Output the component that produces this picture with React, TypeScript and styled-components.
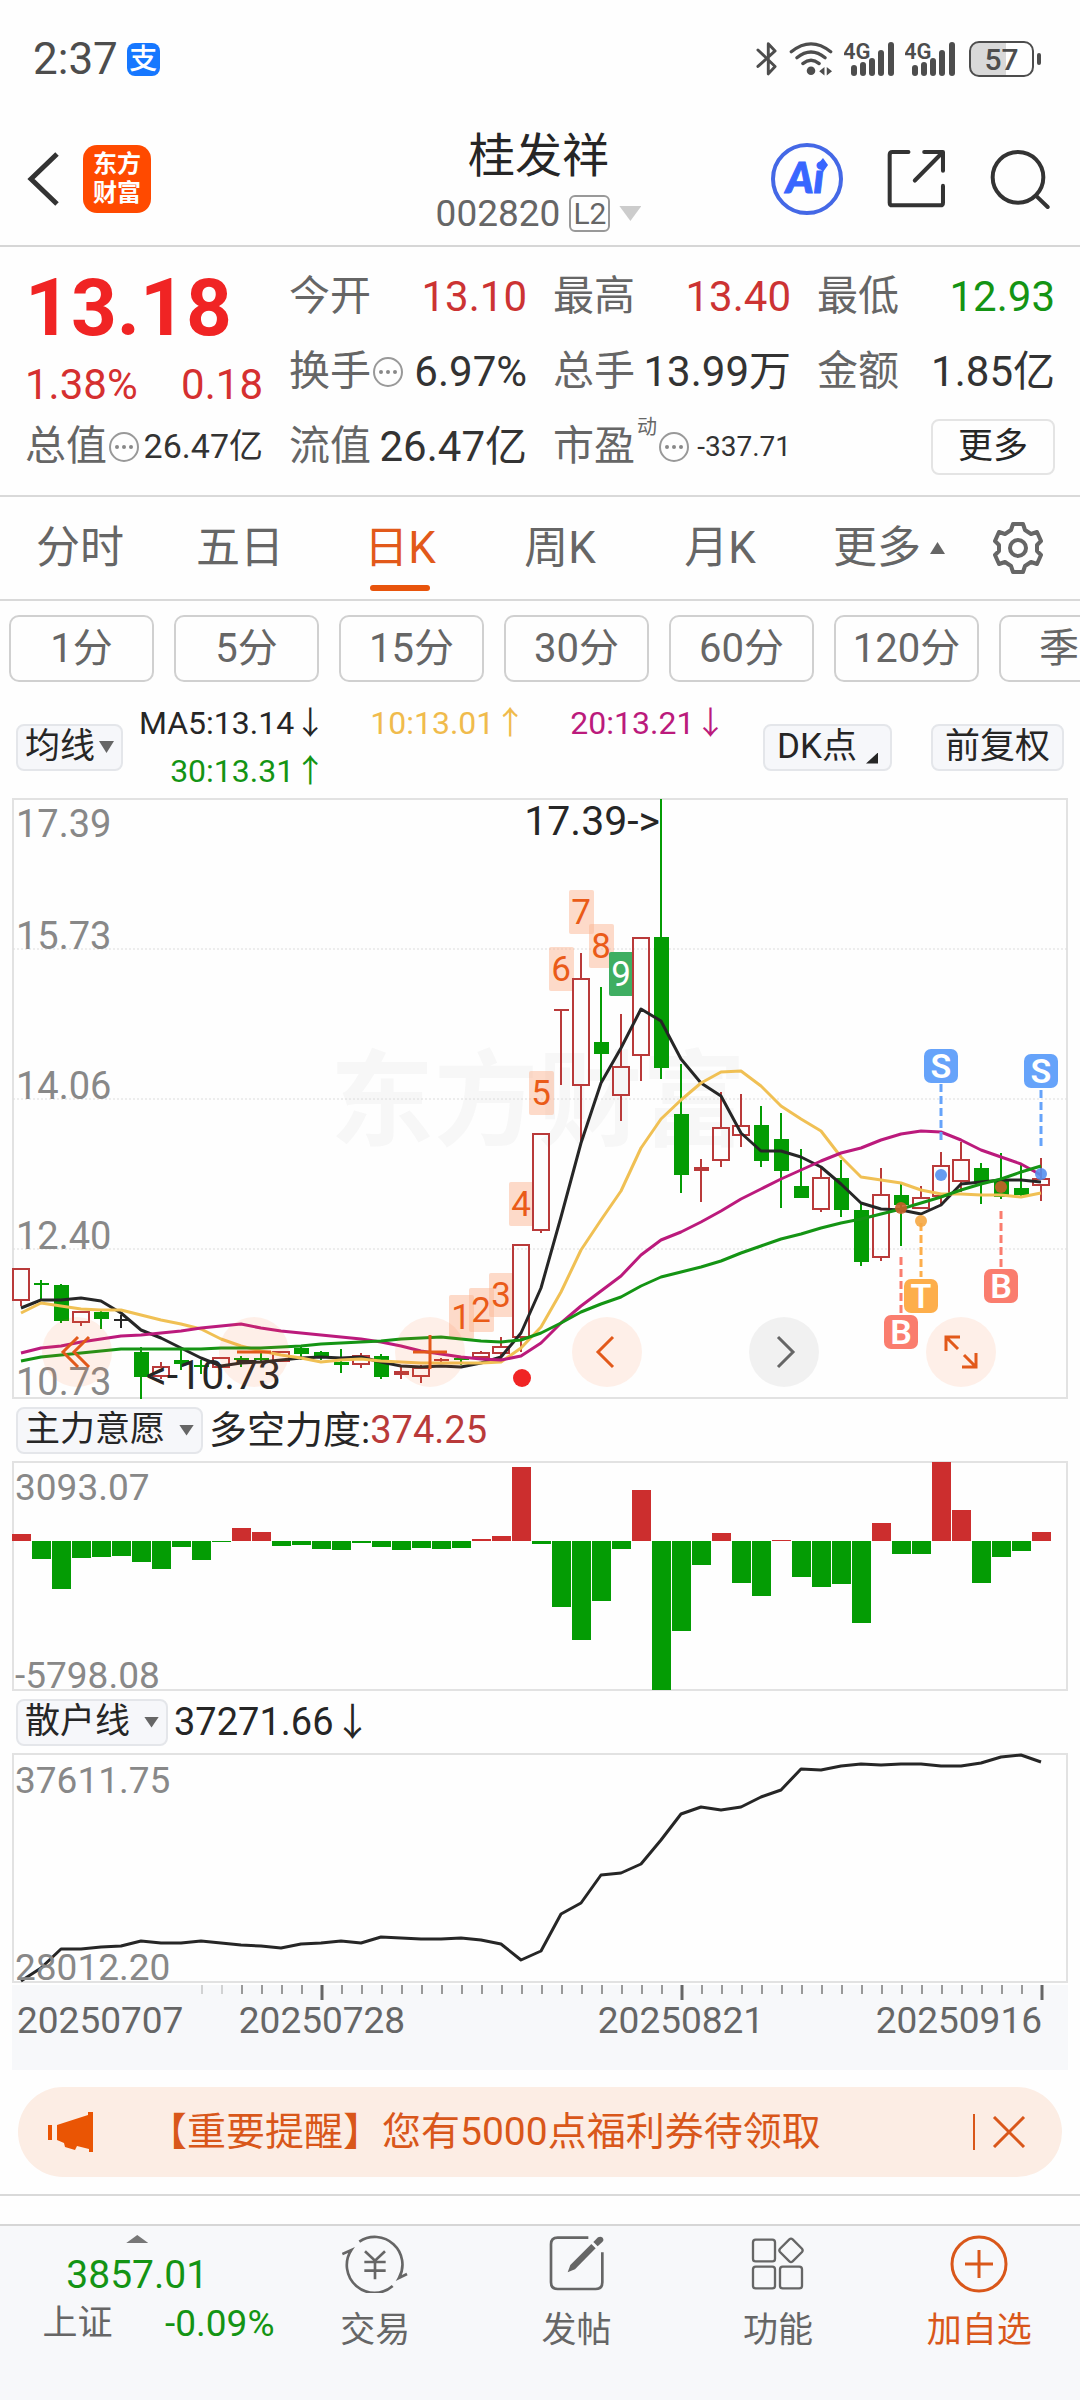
import React from "react";
import styled, { createGlobalStyle } from "styled-components";

const UP = "#b93a3a";
const DOWN = "#049c04";
const ORANGE = "#e2591a";
const INK = "#262626";
const GREY = "#666666";

const GlobalStyle = createGlobalStyle`
  * { box-sizing: border-box; }
  body {
    margin: 0;
    background: #fefefe;
    color: ${INK};
    font-family: Roboto, "Noto Sans CJK SC", sans-serif;
  }
  button {
    font-family: inherit;
    color: inherit;
    background: none;
    border: 0;
    padding: 0;
    margin: 0;
    white-space: nowrap;
    cursor: pointer;
  }
  svg { display: block; flex: none; }
`;

const Page = styled.div`
  display: flex;
  flex-direction: column;
  min-height: 100vh;
  overflow: hidden;
`;

/* ---------- status bar ---------- */

const StatusBar = styled.div`
  display: flex;
  align-items: center;
  justify-content: space-between;
  padding: 36px 39px 30px 33px;
  color: #4d4d4d;
`;

const StatusGroup = styled.div<{ $gap: number }>`
  display: flex;
  align-items: center;
  gap: ${(p) => p.$gap}px;
  height: 46px;
`;

const Clock = styled.span`
  font-size: 44px;
  line-height: 46px;
`;

const PayBadge = styled.span`
  width: 33px;
  height: 33px;
  border-radius: 8px;
  background: #1677ff;
  color: #fff;
  font-size: 28px;
  font-weight: 500;
  line-height: 33px;
  text-align: center;
`;

const Battery = styled.span`
  display: flex;
  align-items: center;
  margin-left: 3px;

  &::after {
    content: "";
    width: 4px;
    height: 12px;
    margin-left: 3px;
    border-radius: 2px;
    background: #4d4d4d;
  }
`;

const BatteryBody = styled.span`
  width: 65px;
  height: 36px;
  border: 2px solid #4d4d4d;
  border-radius: 10px;
  background: linear-gradient(90deg, #d9d9d9 58%, transparent 58%);
  font-size: 30px;
  font-weight: 500;
  line-height: 34px;
  text-align: center;
`;

/* ---------- header ---------- */

const Header = styled.header`
  display: grid;
  grid-template-columns: 1fr auto 1fr;
  align-items: center;
  height: 135px;
  padding: 0 30px 0 27px;
  border-bottom: 2px solid #d6d6d6;
`;

const HeaderSide = styled.div<{ $end?: boolean }>`
  display: flex;
  align-items: center;
  gap: ${(p) => (p.$end ? 44 : 24)}px;
  justify-content: ${(p) => (p.$end ? "flex-end" : "flex-start")};
`;

const AppLogo = styled.span`
  display: grid;
  place-content: center;
  width: 68px;
  height: 68px;
  border-radius: 14px;
  background: #ff4a00;
  color: #fff;
  font-size: 24px;
  font-weight: 700;
  line-height: 29px;
`;

const TitleBlock = styled.div`
  display: flex;
  flex-direction: column;
  align-items: center;
  padding-top: 8px;
`;

const Title = styled.h1`
  margin: 0;
  font-size: 47px;
  font-weight: 400;
  line-height: 62px;
`;

const CodeButton = styled.button`
  display: flex;
  align-items: center;
  gap: 9px;
  color: ${GREY};
  font-size: 37px;
  line-height: 54px;
`;

const LevelTag = styled.span`
  width: 41px;
  height: 37px;
  border: 2px solid #999;
  border-radius: 6px;
  font-size: 30px;
  line-height: 34px;
  text-align: center;
`;

const Triangle = styled.i<{ $w: number; $h: number; $color: string; $up?: boolean }>`
  flex: none;
  width: ${(p) => p.$w}px;
  height: ${(p) => p.$h}px;
  background: ${(p) => p.$color};
  clip-path: ${(p) =>
    p.$up ? "polygon(50% 0, 100% 100%, 0 100%)" : "polygon(0 0, 100% 0, 50% 100%)"};
`;

/* ---------- quote ---------- */

const Quote = styled.section`
  display: grid;
  grid-template-columns: repeat(4, 1fr);
  grid-auto-rows: 75px;
  column-gap: 26px;
  padding: 12px 25px 11px;
  border-bottom: 2px solid #d9d9d9;
`;

const PriceCell = styled.div`
  grid-row: span 2;
  color: #f02424;
`;

const Price = styled.div`
  font-size: 80px;
  font-weight: 700;
  line-height: 98px;
`;

const Change = styled.div`
  display: flex;
  justify-content: space-between;
  color: #d53030;
  font-size: 42px;
  line-height: 56px;
`;

const Cell = styled.div`
  display: flex;
  align-items: center;
  justify-content: space-between;
  white-space: nowrap;
`;

const CellLabel = styled.span`
  display: flex;
  align-items: center;
  align-self: stretch;
  gap: 2px;
  color: ${GREY};
  font-size: 41px;
  line-height: 75px;

  sup {
    align-self: flex-start;
    padding-top: 8px;
    font-size: 20px;
    line-height: 20px;
  }
`;

const CellValue = styled.span<{ $color?: string; $size?: number }>`
  color: ${(p) => p.$color || "#333"};
  font-size: ${(p) => p.$size || 42}px;
  line-height: 75px;
`;

const MoreCell = styled.div`
  display: flex;
  align-items: center;
  justify-content: flex-end;
`;

const MoreButton = styled.button`
  width: 124px;
  height: 56px;
  border: 2px solid #e4e4e4;
  border-radius: 8px;
  font-size: 35px;
  line-height: 48px;
`;

/* ---------- period tabs ---------- */

const Tabs = styled.nav`
  display: grid;
  grid-template-columns: repeat(5, 160fr) 178fr 80fr;
  height: 104px;
  padding-right: 22px;
  border-bottom: 2px solid #d9d9d9;
`;

const Tab = styled.button<{ $active?: boolean }>`
  display: flex;
  align-items: center;
  justify-content: center;
  gap: 9px;
  position: relative;
  color: ${(p) => (p.$active ? ORANGE : GREY)};
  font-size: 44px;
  line-height: 96px;

  &::after {
    content: "";
    display: ${(p) => (p.$active ? "block" : "none")};
    position: absolute;
    bottom: 8px;
    width: 60px;
    height: 6px;
    border-radius: 3px;
    background: #e8540c;
  }
`;

const Pills = styled.div`
  display: flex;
  gap: 20px;
  padding: 14px 0 14px 9px;
  overflow: hidden;
`;

const Pill = styled.button`
  flex: none;
  width: 145px;
  height: 67px;
  border: 2px solid #d0d0d0;
  border-radius: 10px;
  color: ${GREY};
  font-size: 40px;
  line-height: 60px;
`;

/* ---------- average legend ---------- */

const Legend = styled.div`
  display: flex;
  align-items: center;
  padding: 0 16px;
  height: 102px;
`;

const Chip = styled.button<{ $gap?: number; $pad?: number }>`
  display: flex;
  align-items: center;
  gap: ${(p) => p.$gap || 0}px;
  flex: none;
  height: 47px;
  padding: 0 ${(p) => p.$pad || 7}px;
  border: 2px solid #e4e6ea;
  border-radius: 8px;
  background: #f6f7fa;
  font-size: 35px;
  line-height: 42px;
`;

const Corner = styled.i`
  align-self: flex-end;
  width: 12px;
  height: 11px;
  margin-bottom: 5px;
  background: ${INK};
  clip-path: polygon(100% 0, 100% 100%, 0 100%);
`;

const Averages = styled.div`
  display: grid;
  grid-template-columns: repeat(3, auto);
  justify-content: start;
  justify-items: end;
  column-gap: 44px;
  flex: 1;
  padding-left: 16px;
  font-size: 32px;
  line-height: 48px;
`;

const Tint = styled.span<{ $color: string }>`
  color: ${(p) => p.$color};
  white-space: nowrap;
`;

const RightChips = styled.div`
  display: flex;
  gap: 39px;
`;

/* ---------- charts ---------- */

const Panel = styled.div`
  position: relative;
`;

const Plot = styled.svg`
  width: 100%;
  height: auto;
`;

const PanelTitle = styled.div`
  display: flex;
  align-items: center;
  gap: 6px;
  height: 60px;
  padding: 0 16px;
  font-size: 38px;
  line-height: 58px;
  white-space: nowrap;
`;

const RoundButton = styled.button<{ $x: number; $grey?: boolean }>`
  position: absolute;
  left: ${(p) => p.$x}%;
  top: 92%;
  display: grid;
  place-items: center;
  width: 70px;
  height: 70px;
  border-radius: 50%;
  transform: translate(-50%, -50%);
  background: ${(p) => (p.$grey ? "rgba(0, 0, 0, 0.05)" : "rgba(255, 110, 40, 0.1)")};
`;

/* ---------- banner ---------- */

const BannerWrap = styled.div`
  padding: 17px 18px;
  border-bottom: 2px solid #d9d9d9;
`;

const Banner = styled.div`
  display: flex;
  align-items: center;
  height: 90px;
  padding: 0 36px 0 30px;
  border-radius: 45px;
  background: #fcede4;
  color: #d9571a;
`;

const BannerText = styled.a`
  flex: 1;
  padding-left: 54px;
  color: inherit;
  font-size: 39px;
  line-height: 48px;
  text-decoration: none;
  white-space: nowrap;
`;

const CloseButton = styled.button`
  height: 36px;
  padding-left: 17px;
  border-left: 2px solid #d9571a;
`;

/* ---------- bottom bar ---------- */

const BottomBar = styled.nav`
  display: grid;
  grid-template-columns: 274fr repeat(4, 201fr);
  align-items: start;
  flex: 1;
  margin-top: 28px;
  border-top: 2px solid #d6d6d6;
  background: #f7f8fa;
`;

const IndexButton = styled.button`
  display: flex;
  flex-direction: column;
  align-items: center;
  padding: 9px 0 0;
  color: #149414;
`;

const IndexValue = styled.span`
  margin-top: 9px;
  font-size: 39px;
  line-height: 46px;
`;

const IndexRow = styled.span`
  display: flex;
  justify-content: space-between;
  align-items: center;
  align-self: flex-end;
  width: 232px;
  margin-top: 6px;
  font-size: 37px;
  line-height: 40px;
`;

const IndexName = styled.span`
  color: ${GREY};
  font-size: 35px;
`;

const NavButton = styled.button<{ $accent?: boolean }>`
  display: flex;
  flex-direction: column;
  align-items: center;
  gap: 17px;
  padding-top: 9px;
  color: ${(p) => (p.$accent ? "#d9571a" : GREY)};
  font-size: 35px;
  line-height: 42px;
`;

/* ---------- icons ---------- */

const BluetoothIcon = () => (
  <svg width="22" height="36" viewBox="44 30 68 110" fill="none" stroke="#4d4d4d" strokeWidth="9" strokeLinecap="round" strokeLinejoin="round">
    <path d="M50 57 L103 108 L82 131 V38 L103 60 L50 108" />
  </svg>
);

const WifiIcon = () => (
  <svg width="44" height="36" viewBox="146 30 134 108" fill="none" stroke="#4d4d4d" strokeWidth="10" strokeLinecap="round">
    <path d="M153 62 Q213 14 273 62" />
    <path d="M170 80 Q213 45 256 80" />
    <path d="M188 98 Q213 78 238 98" />
    <circle cx="213" cy="120" r="13" fill="#4d4d4d" stroke="none" />
    <path d="M238 121 L254 108 V134 Z M277 121 L261 108 V134 Z" fill="#4d4d4d" stroke="none" />
  </svg>
);

const SignalIcon = () => (
  <svg width="50" height="36" viewBox="0 0 50 36">
    <text x="-1" y="18" fontSize="22" fontWeight="600" fill="#4d4d4d">4G</text>
    <g fill="#4d4d4d">
      <rect x="7" y="24" width="6" height="11" rx="3" />
      <rect x="16" y="21" width="6" height="14" rx="3" />
      <rect x="25" y="17" width="6" height="18" rx="3" />
      <rect x="34" y="9" width="6" height="26" rx="3" />
      <rect x="44" y="1" width="6" height="34" rx="3" />
    </g>
  </svg>
);

const BackIcon = () => (
  <svg width="32" height="54" viewBox="0 0 32 54" fill="none" stroke="#333" strokeWidth="5">
    <path d="M30 2 L4 27 L30 52" />
  </svg>
);

const AiIcon = () => (
  <svg width="72" height="72" viewBox="0 0 72 72">
    <circle cx="36" cy="36" r="34" fill="none" stroke="#4468e6" strokeWidth="4" />
    <text x="34" y="50" textAnchor="middle" fontFamily="Lato, sans-serif" fontWeight="900" fontStyle="italic" fontSize="42" fill="#3866ff" stroke="#3866ff" strokeWidth="1">Ai</text>
    <path d="M52 15 L57 22 L52 29 L46 22 Z" fill="#3866ff" />
  </svg>
);

const ShareIcon = () => (
  <svg width="59" height="59" viewBox="442 360 176 176" fill="none" stroke="#333" strokeWidth="12" strokeLinecap="round" strokeLinejoin="round">
    <path d="M506 369 H458 Q450 369 450 377 V520 Q450 528 458 528 H601 Q609 528 609 520 V470" />
    <path d="M553 369 H609 V425 M606 372 L525 454" />
  </svg>
);

const SearchIcon = () => (
  <svg width="60" height="60" viewBox="752 355 180 180" fill="none" stroke="#333" strokeWidth="12" strokeLinecap="round">
    <circle cx="836" cy="440" r="76" />
    <path d="M892 497 L925 529" />
  </svg>
);

const InfoIcon = () => (
  <svg width="30" height="30" viewBox="0 0 30 30">
    <circle cx="15" cy="15" r="14" fill="none" stroke="#999" strokeWidth="2" />
    <g fill="#888">
      <circle cx="8" cy="15" r="2" />
      <circle cx="15" cy="15" r="2" />
      <circle cx="22" cy="15" r="2" />
    </g>
  </svg>
);

const GearIcon = () => (
  <svg width="50" height="52" viewBox="0 0 50 52" fill="none" stroke={GREY} strokeWidth="4" strokeLinejoin="round">
    <path d="M20 2 H30 L32 8 L38 12 L44 10 L48 19 L44 23 V29 L48 33 L44 42 L38 40 L32 44 L30 50 H20 L18 44 L12 40 L6 42 L2 33 L6 29 V23 L2 19 L6 10 L12 12 L18 8 Z" />
    <circle cx="25" cy="26" r="8" />
  </svg>
);

const HornIcon = () => (
  <svg width="46" height="40" viewBox="0 0 46 40" fill="#ea5504">
    <rect x="0" y="13" width="4" height="15" />
    <path d="M9 13 L40 3 V0 H45 V40 H41 V37 L29 34 L27 38 L17 35 L16 31 L9 28 Z" />
  </svg>
);

const CloseIcon = () => (
  <svg width="34" height="32" viewBox="0 0 34 32" fill="none" stroke="#d9571a" strokeWidth="3">
    <path d="M2 1 L32 31 M32 1 L2 31" />
  </svg>
);

const TradeIcon = () => (
  <svg width="66" height="58" viewBox="38 29 198 174" fill="none" stroke={GREY} strokeWidth="8">
    <path d="M90 49 A83 83 0 0 1 209 158 L233 146" />
    <path d="M190 182 A83 83 0 0 1 66 74 L39 86" />
    <path d="M107 78 L137 106 L167 78 M105 110 H169 M105 136 H169 M137 106 V162" />
  </svg>
);

const PostIcon = () => (
  <svg width="56" height="58" viewBox="658 32 168 174">
    <path d="M776 40 H684 Q664 40 664 60 V174 Q664 194 684 194 H798 Q818 194 818 174 V84" fill="none" stroke={GREY} strokeWidth="8" />
    <path d="M714 144 L722 122 L785 59 L798 72 L736 135 Z" fill={GREY} />
    <path d="M791 53 L805 39 Q813 35 819 40 Q824 47 818 53 L804 66 Z" fill={GREY} />
  </svg>
);

const FunctionIcon = () => (
  <svg width="54" height="58" viewBox="1265 30 162 174" fill="none" stroke={GREY} strokeWidth="7">
    <rect x="1271" y="44" width="66" height="65" rx="8" />
    <rect x="1271" y="125" width="66" height="65" rx="8" />
    <rect x="1352" y="125" width="66" height="65" rx="8" />
    <path d="M1380 43 Q1385 39 1390 43 L1418 71 Q1422 76 1418 81 L1390 109 Q1385 113 1380 109 L1352 81 Q1348 76 1352 71 Z" />
  </svg>
);

const AddIcon = () => (
  <svg width="58" height="58" viewBox="0 0 58 58" fill="none" stroke="#d9571a" strokeWidth="3">
    <circle cx="29" cy="29" r="27" />
    <path d="M29 15 V43 M15 29 H43" />
  </svg>
);

/* ---------- data ---------- */

type Kind = "up" | "down" | "flat";
type Candle = [Kind, number, number, number, number];

// kind, high, body top, body bottom, low
const candles: Candle[] = [
  ["up", 1268, 1268, 1301, 1306], ["down", 1280, 1283, 1285, 1300], ["down", 1284, 1285, 1321, 1323],
  ["up", 1311, 1311, 1323, 1326], ["down", 1311, 1312, 1319, 1329], ["flat", 1315, 1319, 1321, 1328],
  ["down", 1347, 1352, 1377, 1399], ["up", 1362, 1366, 1377, 1379], ["down", 1350, 1360, 1364, 1370],
  ["down", 1360, 1365, 1367, 1374], ["up", 1357, 1357, 1368, 1368], ["down", 1356, 1358, 1360, 1367],
  ["down", 1353, 1358, 1360, 1362], ["up", 1351, 1351, 1362, 1362], ["down", 1345, 1348, 1354, 1360],
  ["down", 1351, 1352, 1358, 1360], ["down", 1349, 1362, 1365, 1373], ["up", 1353, 1355, 1365, 1368],
  ["down", 1354, 1356, 1377, 1379], ["up", 1367, 1371, 1375, 1379], ["up", 1365, 1367, 1377, 1383],
  ["up", 1358, 1359, 1361, 1363], ["down", 1357, 1358, 1360, 1365], ["up", 1351, 1352, 1358, 1359],
  ["up", 1337, 1346, 1354, 1359], ["up", 1244, 1244, 1338, 1352], ["up", 1133, 1133, 1231, 1233],
  ["up", 1009, 1009, 1011, 1085], ["up", 953, 978, 1086, 1142], ["down", 987, 1042, 1054, 1083],
  ["up", 1014, 1066, 1096, 1121], ["up", 937, 937, 1056, 1081], ["down", 799, 937, 1068, 1079],
  ["down", 1064, 1114, 1175, 1193], ["up", 1159, 1167, 1171, 1202], ["up", 1092, 1127, 1161, 1167],
  ["up", 1094, 1125, 1136, 1147], ["down", 1106, 1125, 1161, 1167], ["down", 1113, 1139, 1171, 1208],
  ["down", 1149, 1186, 1198, 1198], ["up", 1167, 1177, 1210, 1212], ["down", 1160, 1178, 1210, 1217],
  ["down", 1204, 1210, 1262, 1266], ["up", 1168, 1194, 1258, 1261], ["down", 1184, 1195, 1205, 1246],
  ["up", 1186, 1197, 1209, 1209], ["up", 1152, 1165, 1197, 1204], ["up", 1142, 1159, 1182, 1192],
  ["down", 1163, 1168, 1182, 1204], ["down", 1153, 1181, 1197, 1199], ["down", 1163, 1188, 1195, 1197],
  ["up", 1158, 1178, 1186, 1201],
];

const ma5 = [1308, 1300, 1300, 1298, 1301, 1313, 1330, 1338, 1348, 1358, 1366, 1363, 1362, 1360, 1358, 1357, 1358, 1357, 1362, 1366, 1367, 1366, 1367, 1363, 1357, 1333, 1288, 1217, 1143, 1083, 1048, 1009, 1021, 1059, 1083, 1096, 1133, 1151, 1151, 1157, 1167, 1184, 1203, 1209, 1210, 1214, 1205, 1184, 1182, 1180, 1180, 1182];
const ma10 = [1313, 1303, 1306, 1309, 1310, 1310, 1315, 1320, 1324, 1329, 1339, 1346, 1351, 1355, 1358, 1362, 1360, 1359, 1361, 1362, 1363, 1363, 1363, 1363, 1362, 1348, 1327, 1292, 1250, 1220, 1191, 1148, 1119, 1100, 1083, 1072, 1071, 1086, 1106, 1119, 1131, 1157, 1177, 1180, 1183, 1190, 1194, 1194, 1195, 1195, 1197, 1193];
const ma20 = [1353, 1348, 1346, 1342, 1339, 1336, 1335, 1333, 1331, 1328, 1326, 1324, 1328, 1331, 1333, 1335, 1337, 1339, 1342, 1346, 1351, 1354, 1357, 1359, 1360, 1356, 1343, 1323, 1306, 1291, 1276, 1255, 1240, 1232, 1222, 1211, 1199, 1189, 1179, 1170, 1161, 1153, 1148, 1140, 1134, 1131, 1132, 1140, 1150, 1157, 1164, 1175];
const ma30 = [1361, 1357, 1355, 1353, 1351, 1349, 1349, 1349, 1349, 1349, 1348, 1348, 1348, 1347, 1346, 1344, 1343, 1342, 1341, 1339, 1338, 1337, 1339, 1341, 1342, 1340, 1333, 1323, 1312, 1304, 1297, 1286, 1277, 1272, 1267, 1261, 1253, 1246, 1239, 1234, 1228, 1223, 1219, 1214, 1209, 1203, 1197, 1190, 1184, 1179, 1172, 1166];

// bar heights, positive above the zero line
const force = [7, -18, -48, -17, -16, -15, -21, -28, -6, -19, -1, 13, 9, -5, -4, -8, -9, -2, -6, -9, -7, -8, -7, 2, 5, 74, -3, -66, -99, -60, -8, 51, -149, -90, -24, 8, -42, -55, 1, -36, -46, -43, -82, 18, -13, -13, 79, 31, -42, -16, -10, 9];

const retail = [1981, 1968, 1949, 1949, 1947, 1946, 1941, 1943, 1943, 1941, 1943, 1945, 1946, 1948, 1944, 1943, 1941, 1943, 1937, 1938, 1939, 1939, 1938, 1940, 1944, 1960, 1951, 1914, 1903, 1875, 1873, 1864, 1840, 1814, 1807, 1810, 1807, 1797, 1790, 1769, 1770, 1766, 1764, 1765, 1764, 1764, 1766, 1766, 1763, 1757, 1755, 1762];

const cx = (i: number) => 21 + 20 * i;
const line = (ys: number[]) => ys.map((y, i) => `${cx(i)},${y}`).join(" ");

const counts = [
  { n: 1, x: 461, y: 1295 }, { n: 2, x: 481, y: 1288 }, { n: 3, x: 501, y: 1273 },
  { n: 4, x: 521, y: 1182 }, { n: 5, x: 541, y: 1071 }, { n: 6, x: 561, y: 947 },
  { n: 7, x: 581, y: 890 }, { n: 8, x: 601, y: 924 }, { n: 9, x: 621, y: 952 },
];

const marks = [
  { t: "S", x: 941, y: 1049, from: 1084, to: 1140, dot: 1175, c: "#66a3fa" },
  { t: "S", x: 1041, y: 1054, from: 1090, to: 1146, dot: 1174, c: "#66a3fa" },
  { t: "B", x: 901, y: 1315, from: 1257, to: 1313, dot: 1208, c: "#fa7d6e" },
  { t: "T", x: 921, y: 1279, from: 1223, to: 1277, dot: 1221, c: "#fdae4b" },
  { t: "B", x: 1001, y: 1269, from: 1211, to: 1267, dot: 1187, c: "#fa7d6e" },
];
const dotColor: Record<string, string> = { S: "#5590ee", B: "#c8602a", T: "#f5a742" };

const CandleShape = ({ c, i }: { c: Candle; i: number }) => {
  const [kind, high, top, bottom, low] = c;
  const x = cx(i);
  const color = kind === "up" ? UP : kind === "down" ? DOWN : INK;
  const hollow = kind === "up" && bottom - top > 5;
  return (
    <g stroke={color} fill="none" strokeWidth="2">
      {hollow ? (
        <>
          <path d={`M${x} ${high} V${top} M${x} ${bottom} V${low}`} />
          <rect x={x - 8} y={top + 1} width="16" height={bottom - top - 2} />
        </>
      ) : (
        <>
          <path d={`M${x} ${high} V${low}`} />
          <rect x={x - 7} y={top} width="15" height={bottom - top} fill={color} stroke="none" />
        </>
      )}
    </g>
  );
};

const AxisText = ({ x, y, children, anchor = "start", color = "#888", size = 38 }: { x: number; y: number; children: React.ReactNode; anchor?: "start" | "middle" | "end"; color?: string; size?: number }) => (
  <text x={x} y={y} fontSize={size} fill={color} textAnchor={anchor}>{children}</text>
);

const PriceChart = () => (
  <Plot viewBox="0 798 1080 602" role="img" aria-label="日K线图">
    <rect x="13" y="799" width="1054" height="599" fill="none" stroke="#e2e2e2" strokeWidth="2" />
    <text x="538" y="1138" textAnchor="middle" fontSize="104" fontWeight="700" fill="#f7f7f7">东方财富</text>
    <path d="M13 949 H1067 M13 1099 H1067 M13 1249 H1067" stroke="#dcdcdc" strokeDasharray="2 2" />
    <AxisText x={16} y={837}>17.39</AxisText>
    <AxisText x={16} y={949}>15.73</AxisText>
    <AxisText x={16} y={1099}>14.06</AxisText>
    <AxisText x={16} y={1249}>12.40</AxisText>
    <AxisText x={16} y={1395}>10.73</AxisText>
    {counts.map((m) => (
      <g key={m.n}>
        <rect x={m.x - 12} y={m.y} width="25" height="44" rx="2" fill={m.n === 9 ? "#3fae62" : "#fcb594"} fillOpacity={m.n === 9 ? 1 : 0.5} />
        <text x={m.x} y={m.y + 34} textAnchor="middle" fontSize="35" fill={m.n === 9 ? "#fff" : "#ea5b18"}>{m.n}</text>
      </g>
    ))}
    {candles.map((c, i) => <CandleShape key={i} c={c} i={i} />)}
    <g fill="none" strokeWidth="3" strokeLinejoin="round">
      <polyline points={line(ma5)} stroke={INK} />
      <polyline points={line(ma10)} stroke="#f0c054" />
      <polyline points={line(ma20)} stroke="#bb1a7c" />
      <polyline points={line(ma30)} stroke="#149414" />
    </g>
    {marks.map((m) => (
      <g key={m.x}>
        <path d={`M${m.x} ${m.from} V${m.to}`} stroke={m.c} strokeWidth="3" strokeDasharray="8 4" />
        <circle cx={m.x} cy={m.dot} r="6" fill={dotColor[m.t]} fillOpacity="0.9" />
        <rect x={m.x - 17} y={m.y} width="34" height="34" rx="7" fill={m.c} />
        <text x={m.x} y={m.y + 29} textAnchor="middle" fontSize="34" fontWeight="600" fill="#fff">{m.t}</text>
      </g>
    ))}
    <circle cx="522" cy="1378" r="9" fill="#f02424" />
    <AxisText x={660} y={835} anchor="end" color={INK} size={41}>17.39-&gt;</AxisText>
    <AxisText x={146} y={1389} color={INK} size={41}>&lt;-10.73</AxisText>
  </Plot>
);

const ForceChart = () => (
  <Plot viewBox="0 1460 1080 232" role="img" aria-label="多空力度">
    <rect x="13" y="1462" width="1054" height="228" fill="none" stroke="#e2e2e2" strokeWidth="2" />
    <AxisText x={15} y={1500} size={37}>3093.07</AxisText>
    <AxisText x={15} y={1688} size={37}>-5798.08</AxisText>
    {force.map((v, i) => (
      <rect key={i} x={cx(i) - 9} y={v > 0 ? 1541 - v : 1541} width="19" height={Math.abs(v)} fill={v > 0 ? "#cc2e2e" : DOWN} />
    ))}
  </Plot>
);

const RetailChart = () => (
  <Plot viewBox="0 1752 1080 318" role="img" aria-label="散户线">
    <rect x="13" y="1754" width="1054" height="228" fill="none" stroke="#e2e2e2" strokeWidth="2" />
    <polyline points={line(retail)} fill="none" stroke={INK} strokeWidth="3" strokeLinejoin="round" />
    <AxisText x={15} y={1793} size={37}>37611.75</AxisText>
    <AxisText x={15} y={1980} size={37}>28012.20</AxisText>
    <rect x="12" y="1985" width="1056" height="85" fill="#f7f8fa" />
    {retail.map((_, i) =>
      i < 9 ? null : (
        <path
          key={i}
          d={`M${cx(i) + 1} 1985 V${(i - 15) % 18 === 0 ? 2000 : 1994}`}
          stroke={(i - 15) % 18 === 0 ? "#666" : "#999"}
          strokeWidth={(i - 15) % 18 === 0 ? 3 : 2}
          strokeOpacity={i < 11 ? 0.4 : 1}
        />
      )
    )}
    <AxisText x={17} y={2033} size={37} color={GREY}>20250707</AxisText>
    <AxisText x={322} y={2033} size={37} color={GREY} anchor="middle">20250728</AxisText>
    <AxisText x={681} y={2033} size={37} color={GREY} anchor="middle">20250821</AxisText>
    <AxisText x={1042} y={2033} size={37} color={GREY} anchor="end">20250916</AxisText>
  </Plot>
);

const Stroke = ({ d, color = ORANGE, size = 34 }: { d: string; color?: string; size?: number }) => (
  <svg width={size} height={size} viewBox={`0 0 ${size} ${size}`} fill="none" stroke={color} strokeWidth="3">
    <path d={d} />
  </svg>
);

export default function App() {
  return (
    <>
      <GlobalStyle />
      <Page>
        <StatusBar>
          <StatusGroup $gap={9}>
            <Clock>2:37</Clock>
            <PayBadge>支</PayBadge>
          </StatusGroup>
          <StatusGroup $gap={11}>
            <BluetoothIcon />
            <WifiIcon />
            <SignalIcon />
            <SignalIcon />
            <Battery><BatteryBody>57</BatteryBody></Battery>
          </StatusGroup>
        </StatusBar>

        <Header>
          <HeaderSide>
            <button aria-label="返回"><BackIcon /></button>
            <AppLogo><span>东方</span><span>财富</span></AppLogo>
          </HeaderSide>
          <TitleBlock>
            <Title>桂发祥</Title>
            <CodeButton>
              002820
              <LevelTag>L2</LevelTag>
              <Triangle $w={22} $h={15} $color="#cccccc" />
            </CodeButton>
          </TitleBlock>
          <HeaderSide $end>
            <button aria-label="Ai"><AiIcon /></button>
            <button aria-label="分享"><ShareIcon /></button>
            <button aria-label="搜索"><SearchIcon /></button>
          </HeaderSide>
        </Header>

        <Quote>
          <PriceCell>
            <Price>13.18</Price>
            <Change><span>1.38%</span><span>0.18</span></Change>
          </PriceCell>
          <Cell><CellLabel>今开</CellLabel><CellValue $color="#cc3333">13.10</CellValue></Cell>
          <Cell><CellLabel>最高</CellLabel><CellValue $color="#cc3333">13.40</CellValue></Cell>
          <Cell><CellLabel>最低</CellLabel><CellValue $color="#149414">12.93</CellValue></Cell>
          <Cell><CellLabel>换手<InfoIcon /></CellLabel><CellValue>6.97%</CellValue></Cell>
          <Cell><CellLabel>总手</CellLabel><CellValue>13.99万</CellValue></Cell>
          <Cell><CellLabel>金额</CellLabel><CellValue>1.85亿</CellValue></Cell>
          <Cell><CellLabel>总值<InfoIcon /></CellLabel><CellValue $size={34}>26.47亿</CellValue></Cell>
          <Cell><CellLabel>流值</CellLabel><CellValue>26.47亿</CellValue></Cell>
          <Cell><CellLabel>市盈<sup>动</sup><InfoIcon /></CellLabel><CellValue $size={28}>-337.71</CellValue></Cell>
          <MoreCell><MoreButton>更多</MoreButton></MoreCell>
        </Quote>

        <Tabs>
          <Tab>分时</Tab>
          <Tab>五日</Tab>
          <Tab $active>日K</Tab>
          <Tab>周K</Tab>
          <Tab>月K</Tab>
          <Tab>更多<Triangle $w={15} $h={12} $color={GREY} $up /></Tab>
          <Tab aria-label="设置"><GearIcon /></Tab>
        </Tabs>

        <Pills>
          {["1分", "5分", "15分", "30分", "60分", "120分", "季K"].map((p) => <Pill key={p}>{p}</Pill>)}
        </Pills>

        <Legend>
          <Chip $gap={4}>均线<Triangle $w={15} $h={12} $color={GREY} /></Chip>
          <Averages>
            <Tint $color={INK}>MA5:13.14↓</Tint>
            <Tint $color="#f0bb4c">10:13.01↑</Tint>
            <Tint $color="#bb1a7c">20:13.21↓</Tint>
            <Tint $color="#149414">30:13.31↑</Tint>
          </Averages>
          <RightChips>
            <Chip $gap={9} $pad={12}>DK点<Corner /></Chip>
            <Chip $pad={12}>前复权</Chip>
          </RightChips>
        </Legend>

        <Panel>
          <PriceChart />
          <RoundButton $x={7.1} aria-label="向左快移"><Stroke d="M18 2 L3 17 L18 32 M29 2 L14 17 L29 32" /></RoundButton>
          <RoundButton $x={23.5} aria-label="缩小"><Stroke d="M0 17 H34" /></RoundButton>
          <RoundButton $x={39.8} aria-label="放大"><Stroke d="M0 17 H34 M17 0 V34" /></RoundButton>
          <RoundButton $x={56.2} aria-label="上一个"><Stroke d="M23 2 L8 17 L23 32" /></RoundButton>
          <RoundButton $x={72.6} $grey aria-label="下一个"><Stroke d="M11 2 L26 17 L11 32" color="#666" /></RoundButton>
          <RoundButton $x={89} aria-label="全屏"><Stroke d="M2 16 V2 H16 M2 2 L14 14 M32 18 V32 H18 M32 32 L20 20" /></RoundButton>
        </Panel>

        <PanelTitle>
          <Chip $gap={14}>主力意愿<Triangle $w={15} $h={11} $color={GREY} /></Chip>
          <span>多空力度:<Tint $color={UP}>374.25</Tint></span>
        </PanelTitle>
        <ForceChart />

        <PanelTitle>
          <Chip $gap={14}>散户线<Triangle $w={15} $h={11} $color={GREY} /></Chip>
          <span>37271.66↓</span>
        </PanelTitle>
        <RetailChart />

        <BannerWrap>
          <Banner>
            <HornIcon />
            <BannerText href="#notice">【重要提醒】您有5000点福利券待领取</BannerText>
            <CloseButton aria-label="关闭"><CloseIcon /></CloseButton>
          </Banner>
        </BannerWrap>

        <BottomBar>
          <IndexButton>
            <Triangle $w={22} $h={8} $color="#777777" $up />
            <IndexValue>3857.01</IndexValue>
            <IndexRow><IndexName>上证</IndexName>-0.09%</IndexRow>
          </IndexButton>
          <NavButton><TradeIcon />交易</NavButton>
          <NavButton><PostIcon />发帖</NavButton>
          <NavButton><FunctionIcon />功能</NavButton>
          <NavButton $accent><AddIcon />加自选</NavButton>
        </BottomBar>
      </Page>
    </>
  );
}
